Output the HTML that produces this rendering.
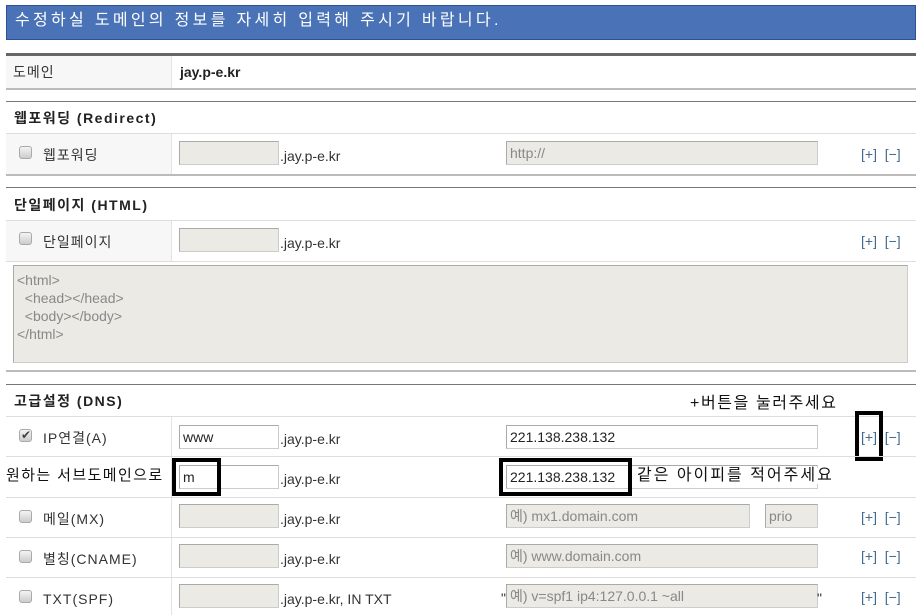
<!DOCTYPE html><html><head><meta charset="utf-8"><style>
*{margin:0;padding:0;box-sizing:border-box}
body{width:922px;height:615px;background:#fff;position:relative;overflow:hidden;font-family:"Liberation Sans","Noto Sans CJK KR","NanumGothic",sans-serif;font-size:14px;color:#333;line-height:16px}
.a{position:absolute}
.hl{position:absolute;left:6px;width:910px;height:1px;background:#ddd}
.vl{position:absolute;left:171px;width:1px;background:#e3e3e3}
.lab{position:absolute;left:6px;width:165px;background:#f7f7f7}
.in{position:absolute;height:24px;border:1px solid #ccc;background:#ebeae4;font-size:14px;color:#888;padding:3px 3px;line-height:16px;border-left-color:#aaa;border-top-color:#aaa;white-space:nowrap}
.w{background:#fff;color:#222}
.t{position:absolute;font-size:14px;white-space:nowrap;line-height:16px}
.k{letter-spacing:1px}
.cb{position:absolute;width:13px;height:13px;border:1px solid #aaa;border-radius:3px;background:linear-gradient(#f4f4f4,#ccc)}
.lk{position:absolute;color:#44698f;font-size:14px;white-space:nowrap}
.h{position:absolute;left:14px;font-weight:bold;font-size:14px;color:#222;letter-spacing:1.5px}
.bx{position:absolute;border:4px solid #000}
</style></head><body>
<div class="a" style="left:6px;top:5px;width:910px;height:35px;background:#4a72b6;border:1px solid #2f4f96"></div>
<div class="t" style="left:15px;top:13px;color:#fff;font-size:16px;letter-spacing:3.3px">수정하실 도메인의 정보를 자세히 입력해 주시기 바랍니다.</div>

<div class="a" style="left:6px;top:53px;width:910px;height:3px;background:#666"></div>
<div class="lab" style="top:56px;height:32px"></div>
<div class="vl" style="top:56px;height:32px"></div>
<div class="t k" style="left:13px;top:64px">도메인</div>
<div class="t" style="left:180px;top:64px;font-weight:bold;color:#222">jay.p-e.kr</div>
<div class="a" style="left:6px;top:88px;width:910px;height:2px;background:#bbb"></div>

<div class="a" style="left:6px;top:101px;width:910px;height:1px;background:#777"></div>
<div class="h" style="top:110px">웹포워딩 (Redirect)</div>
<div class="hl" style="top:133px"></div>
<div class="lab" style="top:134px;height:40px"></div><div class="vl" style="top:134px;height:40px"></div>
<div class="cb" style="left:19px;top:146px"></div><div class="t k" style="left:43px;top:147px">웹포워딩</div>
<div class="in" style="left:179px;top:141px;width:100px"></div><div class="t" style="left:280px;top:148px">.jay.p-e.kr</div>
<div class="in" style="left:506px;top:141px;width:312px">http://</div>
<div class="lk" style="left:861px;top:146px">[+]&nbsp; [−]</div>
<div class="a" style="left:6px;top:174px;width:910px;height:2px;background:#bbb"></div>

<div class="a" style="left:6px;top:187px;width:910px;height:1px;background:#777"></div>
<div class="h" style="top:197px">단일페이지 (HTML)</div>
<div class="hl" style="top:220px"></div>
<div class="lab" style="top:221px;height:40px"></div><div class="vl" style="top:221px;height:40px"></div>
<div class="cb" style="left:19px;top:232px"></div><div class="t k" style="left:43px;top:234px">단일페이지</div>
<div class="in" style="left:179px;top:228px;width:100px"></div><div class="t" style="left:280px;top:235px">.jay.p-e.kr</div>
<div class="lk" style="left:861px;top:233px">[+]&nbsp; [−]</div>
<div class="hl" style="top:261px"></div>
<div class="in" style="left:13px;top:265px;width:895px;height:98px;line-height:18px;padding:5px 3px;white-space:pre">&lt;html&gt;
  &lt;head&gt;&lt;/head&gt;
  &lt;body&gt;&lt;/body&gt;
&lt;/html&gt;</div>
<div class="a" style="left:6px;top:370px;width:910px;height:2px;background:#bbb"></div>

<div class="a" style="left:6px;top:384px;width:910px;height:1px;background:#777"></div>
<div class="h" style="top:393px">고급설정 (DNS)</div>
<div class="t" style="left:690px;top:396px;font-size:16px;color:#111;letter-spacing:1.6px">+버튼을 눌러주세요</div>
<div class="hl" style="top:416px"></div>
<div class="vl" style="top:417px;height:198px"></div>
<div class="cb" style="left:19px;top:429px"></div><div class="t" style="left:21px;top:427px;font-size:12px;color:#444">✔</div><div class="t k" style="left:43px;top:430px">IP연결(A)</div>
<div class="in w" style="left:179px;top:425px;width:100px">www</div><div class="t" style="left:280px;top:431px">.jay.p-e.kr</div>
<div class="in w" style="left:506px;top:425px;width:312px">221.138.238.132</div>
<div class="lk" style="left:861px;top:429px">[+]&nbsp; [−]</div>
<div class="bx" style="left:855px;top:411px;width:28px;height:50px"></div>
<div class="hl" style="top:456px"></div>
<div class="t" style="left:6px;top:468px;font-size:15px;color:#111;letter-spacing:1.4px">원하는 서브도메인으로</div>
<div class="in w" style="left:179px;top:465px;width:100px">m</div><div class="t" style="left:280px;top:471px">.jay.p-e.kr</div>
<div class="bx" style="left:172px;top:458px;width:49px;height:38px"></div>
<div class="in w" style="left:506px;top:465px;width:312px">221.138.238.132</div>
<div class="bx" style="left:499px;top:458px;width:133px;height:38px"></div>
<div class="t" style="left:637px;top:468px;font-size:16px;color:#111;background:#fff;letter-spacing:2px">같은 아이피를 적어주세요</div>
<div class="hl" style="top:497px"></div>
<div class="cb" style="left:19px;top:510px"></div><div class="t k" style="left:43px;top:511px">메일(MX)</div>
<div class="in" style="left:179px;top:504px;width:100px"></div><div class="t" style="left:280px;top:511px">.jay.p-e.kr</div>
<div class="in" style="left:506px;top:504px;width:244px">예) mx1.domain.com</div>
<div class="in" style="left:765px;top:504px;width:53px">prio</div>
<div class="lk" style="left:861px;top:509px">[+]&nbsp; [−]</div>
<div class="hl" style="top:537px"></div>
<div class="cb" style="left:19px;top:550px"></div><div class="t k" style="left:43px;top:551px">별칭(CNAME)</div>
<div class="in" style="left:179px;top:544px;width:100px"></div><div class="t" style="left:280px;top:551px">.jay.p-e.kr</div>
<div class="in" style="left:506px;top:544px;width:312px">예) www.domain.com</div>
<div class="lk" style="left:861px;top:548px">[+]&nbsp; [−]</div>
<div class="hl" style="top:577px"></div>
<div class="cb" style="left:19px;top:590px"></div><div class="t k" style="left:43px;top:591px">TXT(SPF)</div>
<div class="in" style="left:179px;top:584px;width:100px"></div><div class="t" style="left:280px;top:591px">.jay.p-e.kr, IN TXT</div>
<div class="t" style="left:501px;top:590px">"</div>
<div class="in" style="left:506px;top:584px;width:312px">예) v=spf1 ip4:127.0.0.1 ~all</div>
<div class="t" style="left:817px;top:590px">"</div>
<div class="lk" style="left:861px;top:589px">[+]&nbsp; [−]</div>
</body></html>
